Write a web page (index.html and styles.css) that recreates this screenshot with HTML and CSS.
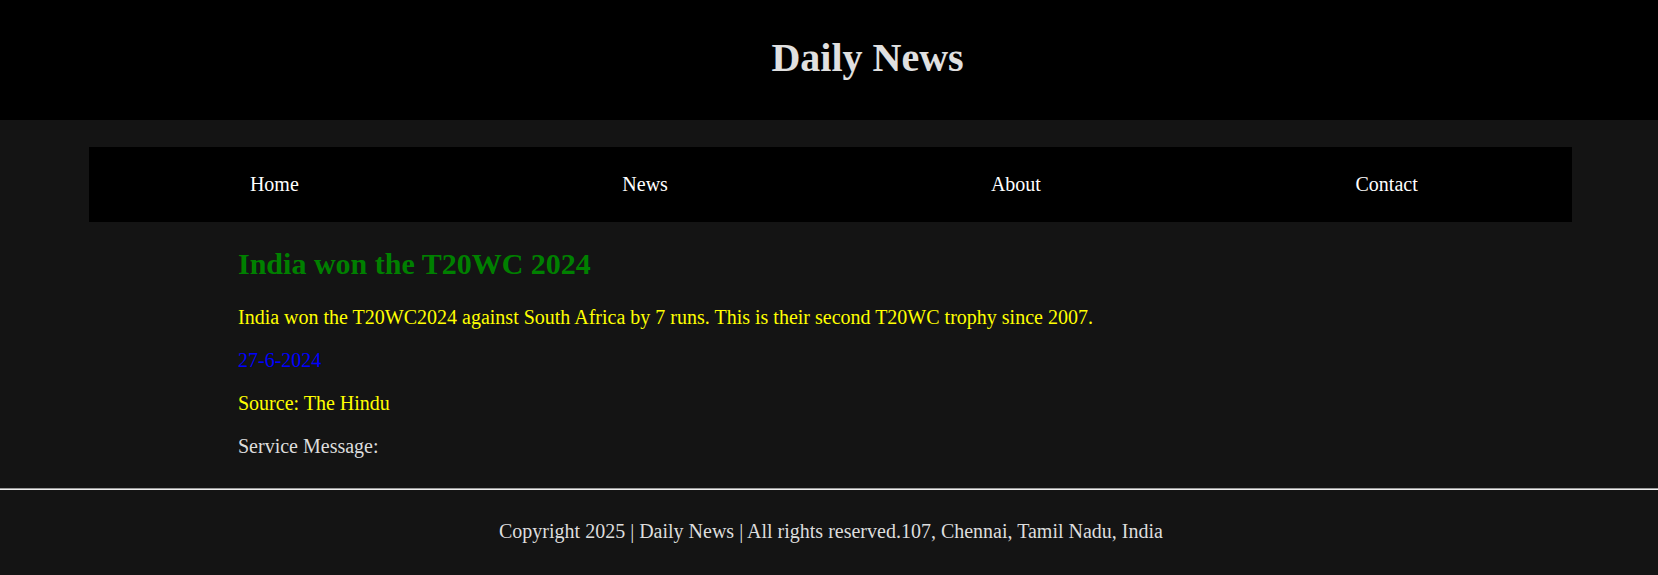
FILE: index.html
```html
<!DOCTYPE html>
<html lang="en">
<head>
<meta charset="utf-8">
<title>Daily News</title>
<link rel="stylesheet" href="styles.css">
</head>
<body>
<header class="site-header">
  <h1 class="site-title">Daily News</h1>
</header>
<nav class="main-nav">
  <a class="nav-link" href="#">Home</a>
  <a class="nav-link" href="#">News</a>
  <a class="nav-link" href="#">About</a>
  <a class="nav-link" href="#">Contact</a>
</nav>
<main class="content">
  <h2 class="headline">India won the T20WC 2024</h2>
  <p class="summary">India won the T20WC2024 against South Africa by 7 runs. This is their second T20WC trophy since 2007.</p>
  <p class="date">27-6-2024</p>
  <p class="source">Source: The Hindu</p>
  <p class="service">Service Message:</p>
</main>
<footer class="site-footer">
  <p class="footer-text">Copyright 2025 | Daily News | All rights reserved.107, Chennai, Tamil Nadu, India</p>
</footer>
</body>
</html>
```
FILE: styles.css
```css
html, body {
  margin: 0;
  padding: 0;
}
body {
  background: #141414;
  color: #dddddd;
  font-family: "Liberation Serif", "Times New Roman", serif;
  font-size: 20px;
}
.site-header {
  background: #000000;
  height: 120px;
  box-sizing: border-box;
  padding: 34px 0 0 77px;
  text-align: center;
}
.site-title {
  margin: 0;
  font-size: 40px;
  font-weight: bold;
  color: #e0e0e0;
  line-height: normal;
}
.main-nav {
  display: flex;
  background: #000000;
  margin: 27px 86px 0 89px;
  padding: 26px 0;
  line-height: 23px;
}
.nav-link {
  flex: 1;
  text-align: center;
  color: #ffffff;
  text-decoration: none;
}
.content {
  padding: 0 0 10px 238px;
}
.headline {
  color: #008000;
  font-size: 30px;
  margin: 25px 0;
}
.content p {
  margin: 20px 0;
}
.summary,
.source {
  color: #ffff00;
}
.date {
  color: #0000ff;
}
.service {
  color: #dddddd;
}
.site-footer {
  border-top: 1px solid #9a9a9a;
  box-shadow: inset 0 1px 0 #eeeeee;
  padding: 11px 0 10px 4px;
  text-align: center;
}
.footer-text {
  margin: 20px 0;
  color: #dddddd;
}
```
